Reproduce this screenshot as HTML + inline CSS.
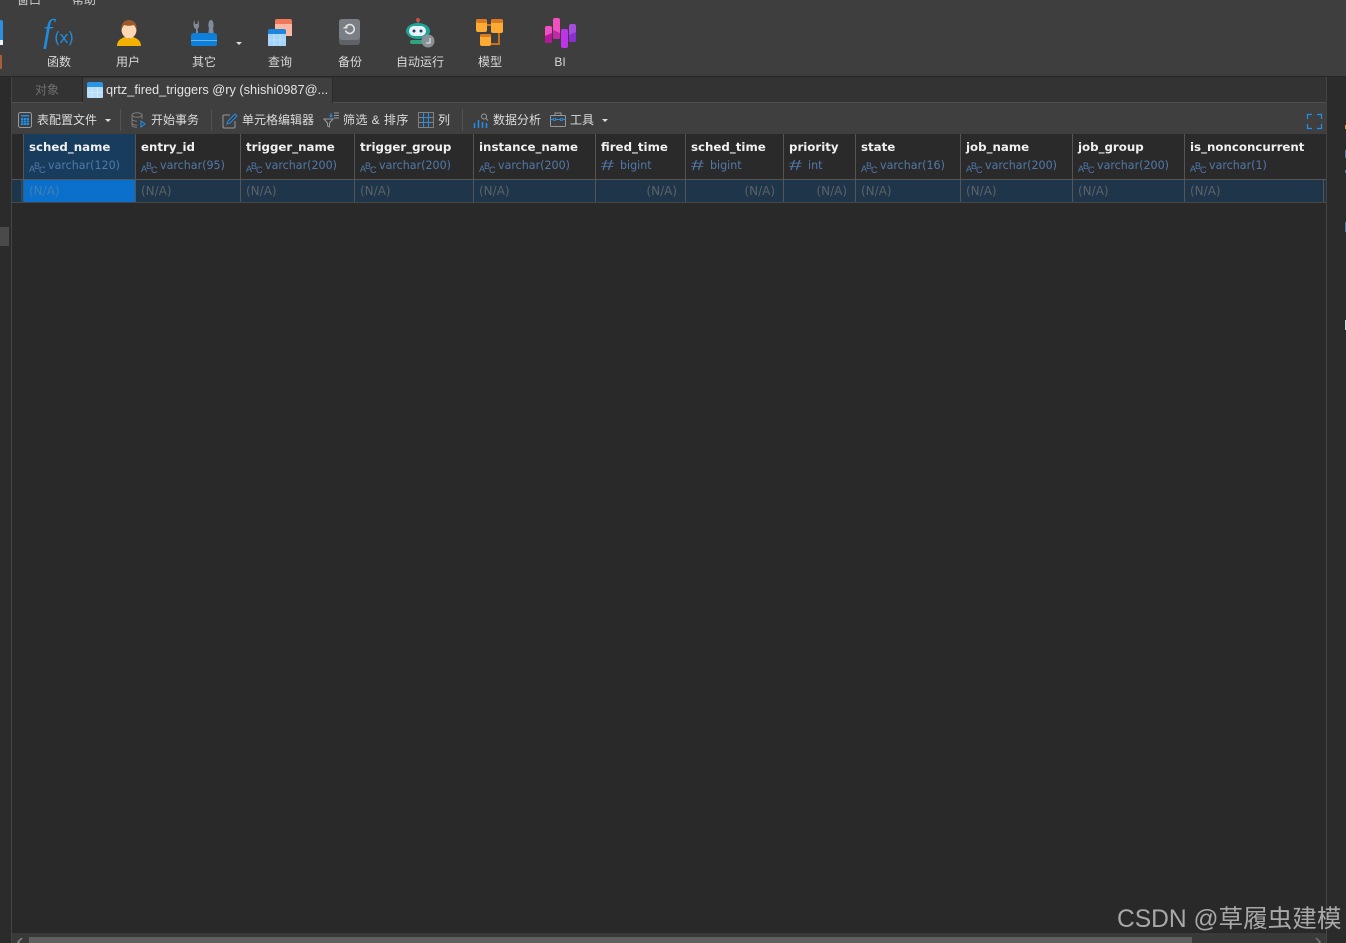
<!DOCTYPE html>
<html><head><meta charset="utf-8"><style>
*{box-sizing:border-box}
html,body{margin:0;padding:0;background:#292929;overflow:hidden}
#p{position:relative;width:1346px;height:943px;overflow:hidden;background:#292929;font-family:"Liberation Sans","Noto Sans CJK SC",sans-serif}
.a{position:absolute}
.t{position:absolute;font-size:12px;color:#dcdcdc;white-space:nowrap;line-height:16px}
.l{position:absolute;transform:translateX(-50%);font-size:12px;color:#d8d8d8;white-space:nowrap;line-height:16px;top:54px}
.h{position:absolute;top:139px;font:bold 11.8px/16px "DejaVu Sans",sans-serif;color:#f0f0f0;white-space:nowrap}
.ty{position:absolute;top:158px;font:11.1px/16px "DejaVu Sans",sans-serif;color:#5079ad;white-space:nowrap}
.ab{position:absolute;top:159px;width:18px;height:14px;font:9px/12px "Liberation Sans",sans-serif;color:#5079ad}
.ab span{position:absolute}
.ab span:nth-child(1){left:0;top:4px}
.ab span:nth-child(2){left:5px;top:1px}
.ab span:nth-child(3){left:10px;top:5px}
.hs{position:absolute;top:158px;font:15px/16px "Liberation Sans",sans-serif;color:#5079ad;transform:scaleX(1.55);transform-origin:left center}
.na{position:absolute;top:183px;font:12px/16px "DejaVu Sans",sans-serif;color:#5b6267;white-space:nowrap}
.v{position:absolute;width:1px;background:#555}
svg{position:absolute;overflow:visible}
</style></head><body><div id="p">
<div class="a" style="left:0;top:0;width:1346px;height:76px;background:#3e3e3e"></div>
<div class="a" style="left:0;top:76px;width:1346px;height:1px;background:#262626"></div>
<div class="a" style="left:0;top:77px;width:1346px;height:26px;background:#333"></div>
<div class="a" style="left:12px;top:102px;width:1315px;height:1px;background:#4f4f4f"></div>
<div class="a" style="left:12px;top:103px;width:1315px;height:31px;background:#3f3f3f"></div>
<div class="a" style="left:0;top:77px;width:12px;height:866px;background:#2b2b2b"></div>
<div class="a" style="left:11px;top:77px;width:1px;height:866px;background:#444"></div>
<div class="a" style="left:1326px;top:77px;width:1px;height:866px;background:#444"></div>
<div class="a" style="left:1327px;top:77px;width:19px;height:866px;background:#2b2b2b"></div>
<div class="a" style="left:0;top:227px;width:9px;height:19px;background:#4a4a4a"></div>

<div class="t" style="left:17px;top:-8px;color:#ccc">窗口</div>
<div class="t" style="left:72px;top:-8px;color:#ccc">帮助</div>

<!-- left clipped icon -->
<div class="a" style="left:0;top:20px;width:3px;height:25px;background:#2e8fe0;border-radius:0 2px 2px 0"></div>
<div class="a" style="left:0;top:40px;width:3px;height:5px;background:#e8f2fb"></div>
<div class="a" style="left:0;top:55px;width:2px;height:14px;background:#a5603a"></div>

<!-- fx -->
<div class="a" style="left:43px;top:14px;font:italic 33px/36px 'Liberation Serif',serif;color:#1f8ce0">f</div>
<div class="a" style="left:54px;top:28px;font:16px/20px 'DejaVu Sans',sans-serif;letter-spacing:-1px;color:#1f8ce0">(x)</div>
<div class="l" style="left:59px">函数</div>

<!-- user -->
<svg style="left:116px;top:20px" width="26" height="26" viewBox="0 0 26 26"><path d="M1 26c0-6 5-8 8-9l4 2 4-2c3 1 8 3 8 9z" fill="#f3b200"/><ellipse cx="13" cy="9.500" rx="7.500" ry="9" fill="#fbd7b5"/><path d="M5.500 10C4.500 3 9 0 13 0s8.500 3 7.500 10c-1-3-2-4.500-3-5-3 1-7 1-9 0-1 .5-2 2-3 5z" fill="#9a5a2c"/></svg>
<div class="l" style="left:128px">用户</div>

<!-- other -->
<svg style="left:191px;top:20px" width="26" height="26" viewBox="0 0 26 26"><path d="M5 15V9C2 8 2 3 3.500 0l.5 4h2.500l.5-4C8.500 3 8.500 8 6.500 9l1 6z" fill="#7f8b96"/><path d="M17 15l1-7c-1-1-1-7 1.500-8h1c2.500 1 2.500 7 1.500 8l1 7z" fill="#7f8b96"/><path d="M0 16q0-3 3-3h20q3 0 3 3v8q0 2-2 2H2q-2 0-2-2z" fill="#0f7fdc"/><rect x="0" y="20" width="26" height="1" fill="#6eb7ef"/></svg>
<div class="a" style="left:236px;top:42px;border:3px solid transparent;border-top:3px solid #ddd"></div>
<div class="l" style="left:204px">其它</div>

<!-- query -->
<svg style="left:268px;top:19px" width="25" height="28" viewBox="0 0 25 28"><rect x="7" y="0" width="17" height="17" rx="2" fill="#f0785a"/><rect x="7" y="5" width="17" height="12" fill="#fbb7a3"/><rect x="0" y="10" width="18" height="17" rx="2" fill="#1b86dc"/><rect x="0" y="15" width="18" height="12" fill="#a4d4f8"/><path d="M6 15v12M12 15v12M0 21h18" stroke="#cfe8fb" stroke-width=".6"/></svg>
<div class="l" style="left:280px">查询</div>

<!-- backup -->
<svg style="left:339px;top:19px" width="21" height="26" viewBox="0 0 21 26"><rect width="21" height="26" rx="3" fill="#5e6267"/><rect width="21" height="21" rx="3" fill="#7a7f85"/><path d="M7 7.500a4.500 4.500 0 1 1-.5 4" fill="none" stroke="#e4e4e4" stroke-width="1.600"/><path d="M3.500 9.500h5V6z" fill="#e4e4e4"/></svg>
<div class="l" style="left:350px">备份</div>

<!-- auto -->
<svg style="left:405px;top:17px" width="32" height="31" viewBox="0 0 32 31"><circle cx="13" cy="3" r="2" fill="#d84848"/><path d="M13 4v4" stroke="#888"/><ellipse cx="13" cy="14" rx="12" ry="8" fill="#1fa49a"/><rect x="4" y="9" width="17" height="10" rx="5" fill="#e7f4f7"/><circle cx="9" cy="14" r="1.500" fill="#26406a"/><circle cx="16" cy="14" r="1.500" fill="#26406a"/><rect x="5" y="23" width="14" height="4" rx="2" fill="#2fa47d"/><circle cx="23" cy="24" r="6.500" fill="#8a9097"/><path d="M25 21v5h-4" stroke="#eee" fill="none"/></svg>
<div class="l" style="left:420px">自动运行</div>

<!-- model -->
<svg style="left:476px;top:19px" width="28" height="28" viewBox="0 0 28 28"><path d="M10 6h8M23 12v13h-11" stroke="#c8711d" stroke-width="2" fill="none"/><rect x="0" y="0" width="11" height="13" rx="2" fill="#fdab34"/><rect y="0" width="11" height="4" rx="2" fill="#d97a20"/><rect x="15" y="0" width="12" height="14" rx="2" fill="#fdab34"/><rect x="15" y="0" width="12" height="4" rx="2" fill="#d97a20"/><rect x="4" y="15" width="11" height="12" rx="2" fill="#fdab34"/><rect x="4" y="15" width="11" height="3" rx="1.500" fill="#d97a20"/></svg>
<div class="l" style="left:490px">模型</div>

<!-- BI -->
<svg style="left:545px;top:18px" width="32" height="31" viewBox="0 0 32 31"><rect x="0" y="8" width="7" height="17" rx="2" fill="#f050c0"/><path d="M0 18l7-3v8a2 2 0 0 1-2 2H2a2 2 0 0 1-2-2z" fill="#b5179a"/><rect x="8" y="0" width="7" height="21" rx="2" fill="#f050c0"/><path d="M8 12l7 3v4a2 2 0 0 1-2 2h-3a2 2 0 0 1-2-2z" fill="#c22aa5"/><rect x="16" y="11" width="7" height="19" rx="2" fill="#c034e8"/><rect x="24" y="6" width="7" height="18" rx="2" fill="#a74ce0"/><path d="M24 17l7-3v8a2 2 0 0 1-2 2h-3a2 2 0 0 1-2-2z" fill="#8a2fd0"/></svg>
<div class="l" style="left:560px">BI</div>

<!-- tabs -->
<div class="t" style="left:35px;top:82px;color:#6f6f6f">对象</div>
<div class="a" style="left:82px;top:77px;width:1px;height:25px;background:#262626"></div>
<div class="a" style="left:83px;top:78px;width:250px;height:25px;background:#3f3f3f;border-right:1px solid #2a2a2a"></div>
<svg style="left:87px;top:82px" width="16" height="16" viewBox="0 0 16 16"><rect width="16" height="16" rx="2" fill="#2b94e6"/><rect y="5" width="16" height="11" rx="1" fill="#b7ddfa"/><path d="M5 5v11M10.500 5v11M0 10.500h16" stroke="#e2f1fd" stroke-width=".6"/></svg>
<div class="t" style="left:106px;top:82px;color:#e4e4e4;font-size:12.75px">qrtz_fired_triggers @ry (shishi0987@...</div>

<!-- toolbar -->
<svg style="left:18px;top:112px" width="15" height="17" viewBox="0 0 15 17"><rect x=".5" y=".5" width="13" height="15" rx="2" fill="none" stroke="#999"/><rect x="3" y="6" width="8" height="7" fill="#1e90f0"/><path d="M3 8.500h8M3 10.500h8M5.700 6v7M8.300 6v7" stroke="#3f3f3f" stroke-width=".6"/><rect x="3" y="3" width="8" height="1.500" fill="#1e90f0"/></svg>
<div class="t" style="left:37px;top:112px">表配置文件</div>
<div class="a" style="left:105px;top:119px;border:3px solid transparent;border-top:3px solid #ddd"></div>
<div class="a" style="left:120px;top:109px;width:1px;height:22px;background:#525252"></div>
<svg style="left:131px;top:112px" width="16" height="17" viewBox="0 0 16 17"><ellipse cx="6" cy="3" rx="5" ry="2.200" fill="none" stroke="#7d7d7d"/><path d="M1 3v10c0 1.500 2.500 2.200 5 2.200M11 3v4M1 7c0 1.500 3 2.200 5 2.200M1 11c0 1.500 3 2.200 5 2.200" fill="none" stroke="#7d7d7d"/><path d="M10 9v6l4-3z" fill="none" stroke="#1e90f0"/></svg>
<div class="t" style="left:151px;top:112px">开始事务</div>
<div class="a" style="left:211px;top:109px;width:1px;height:22px;background:#525252"></div>
<svg style="left:222px;top:112px" width="16" height="17" viewBox="0 0 16 17"><path d="M8 3H2a1 1 0 0 0-1 1v11a1 1 0 0 0 1 1h10a1 1 0 0 0 1-1V9" fill="none" stroke="#999"/><path d="M5 12l1-3 7-7 2 2-7 7z" fill="none" stroke="#1e90f0"/></svg>
<div class="t" style="left:242px;top:112px">单元格编辑器</div>
<svg style="left:323px;top:112px" width="17" height="17" viewBox="0 0 17 17"><path d="M1 7h9l-3.500 4v4l-2-1v-3z" fill="none" stroke="#999"/><path d="M8 1v4M6.500 3.500 8 5l1.500-1.500" fill="none" stroke="#1e90f0"/><path d="M11 1h5M11 3.500h5M11 6h5" stroke="#999"/></svg>
<div class="t" style="left:343px;top:112px;letter-spacing:.45px">筛选&nbsp;&amp;&nbsp;排序</div>
<svg style="left:418px;top:112px" width="16" height="16" viewBox="0 0 16 16"><rect x=".5" y=".5" width="15" height="15" fill="none" stroke="#808080"/><path d="M.5 5.500h5M.5 10.500h5M10.500 5.500h5M10.500 10.500h5" stroke="#808080"/><path d="M5.500.5v15M10.500.5v15M5.500 5.500h5M5.500 10.500h5" stroke="#1e90f0"/></svg>
<div class="t" style="left:438px;top:112px">列</div>
<div class="a" style="left:462px;top:109px;width:1px;height:22px;background:#525252"></div>
<svg style="left:473px;top:113px" width="16" height="16" viewBox="0 0 16 16"><path d="M1.500 15V10M5.500 15V7M9.500 15V9M13.500 15V10" stroke="#1e90f0" stroke-width="1.500"/><circle cx="11" cy="3.500" r="2.500" fill="none" stroke="#999"/><path d="M13 5.500l2 2" stroke="#999"/></svg>
<div class="t" style="left:493px;top:112px">数据分析</div>
<svg style="left:550px;top:112px" width="17" height="16" viewBox="0 0 17 16"><rect x=".5" y="3.500" width="15" height="11" rx="1" fill="none" stroke="#999"/><path d="M5 3.500V1h6v2.500" fill="none" stroke="#999"/><path d="M.5 7.500h15" stroke="#1e90f0"/><rect x="3.500" y="6.500" width="2" height="2" fill="#3f3f3f" stroke="#1e90f0" stroke-width=".8"/><rect x="10.500" y="6.500" width="2" height="2" fill="#3f3f3f" stroke="#1e90f0" stroke-width=".8"/></svg>
<div class="t" style="left:570px;top:112px">工具</div>
<div class="a" style="left:602px;top:119px;border:3px solid transparent;border-top:3px solid #ddd"></div>
<svg style="left:1307px;top:114px" width="15" height="15" viewBox="0 0 15 15"><path d="M.5 5V.5H5M10 .5h4.500V5M14.500 10v4.500H10M5 14.500H.5V10" fill="none" stroke="#1e90f0" stroke-width="1.200"/></svg>

<!-- grid -->
<div class="a" style="left:12px;top:134px;width:1314px;height:46px;background:#2a2a2a"></div>
<div class="a" style="left:24px;top:134px;width:111px;height:45px;background:#173c5c"></div>
<div class="a" style="left:12px;top:179px;width:1314px;height:1px;background:#555"></div>
<div class="a" style="left:12px;top:180px;width:1314px;height:22px;background:#1f3549"></div>
<div class="a" style="left:21px;top:180px;width:3px;height:22px;background:#174c78"></div>
<div class="a" style="left:24px;top:180px;width:111px;height:22px;background:#0a70cc"></div>
<div class="a" style="left:12px;top:202px;width:1314px;height:1px;background:#474747"></div>
<div class="v" style="left:23px;top:134px;height:68px"></div>
<div class="v" style="left:135px;top:134px;height:68px"></div>
<div class="v" style="left:240px;top:134px;height:68px"></div>
<div class="v" style="left:354px;top:134px;height:68px"></div>
<div class="v" style="left:473px;top:134px;height:68px"></div>
<div class="v" style="left:595px;top:134px;height:68px"></div>
<div class="v" style="left:685px;top:134px;height:68px"></div>
<div class="v" style="left:783px;top:134px;height:68px"></div>
<div class="v" style="left:855px;top:134px;height:68px"></div>
<div class="v" style="left:960px;top:134px;height:68px"></div>
<div class="v" style="left:1072px;top:134px;height:68px"></div>
<div class="v" style="left:1184px;top:134px;height:68px"></div>
<div class="v" style="left:1323px;top:179px;height:23px"></div>

<div class="h" style="left:29px">sched_name</div><div class="ab" style="left:29px"><span>A</span><span>B</span><span>C</span></div><div class="ty" style="left:48px">varchar(120)</div><div class="na" style="left:29px;color:#3f7fb5">(N/A)</div>
<div class="h" style="left:141px">entry_id</div><div class="ab" style="left:141px"><span>A</span><span>B</span><span>C</span></div><div class="ty" style="left:160px">varchar(95)</div><div class="na" style="left:141px">(N/A)</div>
<div class="h" style="left:246px">trigger_name</div><div class="ab" style="left:246px"><span>A</span><span>B</span><span>C</span></div><div class="ty" style="left:265px">varchar(200)</div><div class="na" style="left:246px">(N/A)</div>
<div class="h" style="left:360px">trigger_group</div><div class="ab" style="left:360px"><span>A</span><span>B</span><span>C</span></div><div class="ty" style="left:379px">varchar(200)</div><div class="na" style="left:360px">(N/A)</div>
<div class="h" style="left:479px">instance_name</div><div class="ab" style="left:479px"><span>A</span><span>B</span><span>C</span></div><div class="ty" style="left:498px">varchar(200)</div><div class="na" style="left:479px">(N/A)</div>
<div class="h" style="left:601px">fired_time</div><div class="hs" style="left:601px">#</div><div class="ty" style="left:620px">bigint</div><div class="na" style="right:669px">(N/A)</div>
<div class="h" style="left:691px">sched_time</div><div class="hs" style="left:691px">#</div><div class="ty" style="left:710px">bigint</div><div class="na" style="right:571px">(N/A)</div>
<div class="h" style="left:789px">priority</div><div class="hs" style="left:789px">#</div><div class="ty" style="left:808px">int</div><div class="na" style="right:499px">(N/A)</div>
<div class="h" style="left:861px">state</div><div class="ab" style="left:861px"><span>A</span><span>B</span><span>C</span></div><div class="ty" style="left:880px">varchar(16)</div><div class="na" style="left:861px">(N/A)</div>
<div class="h" style="left:966px">job_name</div><div class="ab" style="left:966px"><span>A</span><span>B</span><span>C</span></div><div class="ty" style="left:985px">varchar(200)</div><div class="na" style="left:966px">(N/A)</div>
<div class="h" style="left:1078px">job_group</div><div class="ab" style="left:1078px"><span>A</span><span>B</span><span>C</span></div><div class="ty" style="left:1097px">varchar(200)</div><div class="na" style="left:1078px">(N/A)</div>
<div class="h" style="left:1190px">is_nonconcurrent</div><div class="ab" style="left:1190px"><span>A</span><span>B</span><span>C</span></div><div class="ty" style="left:1209px">varchar(1)</div><div class="na" style="left:1190px">(N/A)</div>

<!-- right clipped glyphs -->
<div class="a" style="left:1345px;top:125px;width:1px;height:4px;background:#f0962a"></div>
<div class="a" style="left:1345px;top:150px;width:1px;height:8px;background:#5079ad"></div>
<div class="a" style="left:1345px;top:170px;width:1px;height:3px;background:#5079ad"></div>
<div class="a" style="left:1345px;top:222px;width:1px;height:10px;background:#5079ad"></div>
<div class="a" style="left:1345px;top:320px;width:1px;height:10px;background:#c8d8e8"></div>

<!-- scrollbar -->
<div class="a" style="left:12px;top:933px;width:1314px;height:10px;background:#3a3a3a"></div>
<div class="a" style="left:29px;top:937px;width:1163px;height:6px;background:#5f5f5f"></div>
<svg style="left:17px;top:938px" width="6" height="5" viewBox="0 0 6 5"><path d="M5 0 1 4l4 4" fill="none" stroke="#888" stroke-width="1.500"/></svg>
<svg style="left:1315px;top:938px" width="6" height="5" viewBox="0 0 6 5"><path d="M1 0l4 4-4 4" fill="none" stroke="#777" stroke-width="1.500"/></svg>

<div class="a" style="left:1117px;top:904px;font:24.6px/32px 'Liberation Sans','Noto Sans CJK SC',sans-serif;color:#a8a8a8;white-space:nowrap">CSDN @草履虫建模</div>
</div></body></html>
